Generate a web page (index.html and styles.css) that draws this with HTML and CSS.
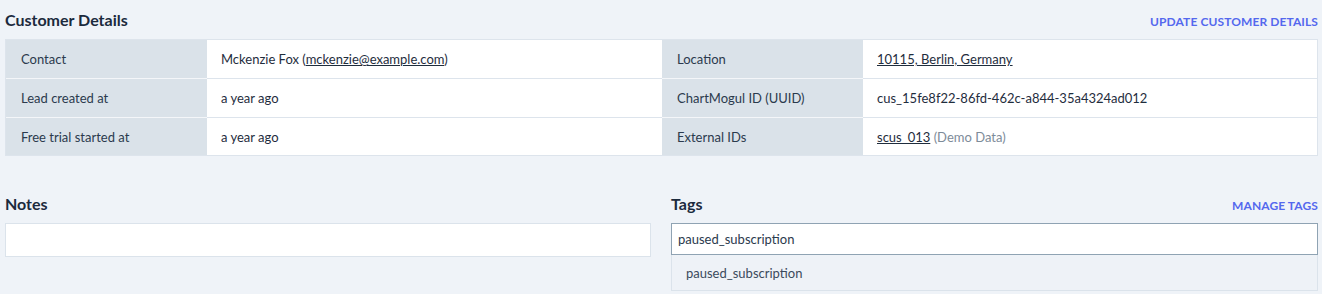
FILE: index.html
```html
<!DOCTYPE html>
<html lang="en">
<head>
<meta charset="utf-8">
<title>Customer Details</title>
<link rel="stylesheet" href="styles.css">
</head>
<body>
<div class="page">
  <section class="details">
    <header class="section-head">
      <h2 class="title">Customer Details</h2>
      <a class="action" href="#">Update customer details</a>
    </header>
    <div class="grid">
      <div class="half">
        <div class="row"><div class="label">Contact</div><div class="value"><span>Mckenzie Fox (<a class="link" href="#">mckenzie@example.com</a>)</span></div></div>
        <div class="row"><div class="label">Lead created at</div><div class="value"><span>a year ago</span></div></div>
        <div class="row"><div class="label">Free trial started at</div><div class="value"><span>a year ago</span></div></div>
      </div>
      <div class="half">
        <div class="row"><div class="label">Location</div><div class="value"><span><a class="link" href="#">10115, Berlin, Germany</a></span></div></div>
        <div class="row"><div class="label">ChartMogul ID (UUID)</div><div class="value"><span>cus_15fe8f22-86fd-462c-a844-35a4324ad012</span></div></div>
        <div class="row"><div class="label">External IDs</div><div class="value"><span><a class="link" href="#">scus_013</a> <span class="muted">(Demo Data)</span></span></div></div>
      </div>
    </div>
  </section>
  <section class="lower">
    <div class="col">
      <header class="section-head">
        <h2 class="title">Notes</h2>
      </header>
      <div class="notes-box"></div>
    </div>
    <div class="col">
      <header class="section-head">
        <h2 class="title">Tags</h2>
        <a class="action" href="#">Manage tags</a>
      </header>
      <div class="tag-input">paused_subscription</div>
      <div class="tag-option">paused_subscription</div>
    </div>
  </section>
</div>
</body>
</html>
```
FILE: styles.css
```css
* { box-sizing: border-box; }
html, body {
  margin: 0;
  padding: 0;
  background: #eff3f8;
}
body {
  font-family: Lato, "Open Sans", sans-serif;
  font-size: 13px;
  color: #1f2d3d;
}
.page {
  padding: 0 4px 0 5px;
}
.section-head {
  display: flex;
  align-items: center;
  justify-content: space-between;
  height: 39px;
}
.title {
  margin: 0;
  font-size: 16px;
  font-weight: 700;
  color: #1b2a3d;
}
.action {
  font-size: 12px;
  font-weight: 700;
  text-transform: uppercase;
  letter-spacing: 0.1px;
  color: #5468ee;
  text-decoration: none;
  padding-top: 3px;
}
.grid {
  display: grid;
  grid-template-columns: 656px 1fr;
  border: 1px solid #dde4ec;
  border-top: 0;
}
.half {
  display: flex;
  flex-direction: column;
}
.row {
  display: grid;
  grid-template-columns: 201px 1fr;
  height: 39px;
  border-top: 1px solid #dde4ec;
}
.row:last-child { height: 38px; }
.label {
  background: #dae2e9;
  padding: 0 15px;
  display: flex;
  align-items: center;
  color: #2b3a4d;
  border-top: 1px solid #f4f6f9;
  margin-top: -1px;
}
.row:first-child .label { border-top-color: #dde4ec; }
.value {
  background: #fff;
  padding: 0 14px;
  display: flex;
  align-items: center;
}
.link {
  color: #1f2d3d;
  text-decoration: underline;
}
.muted { color: #7d8b99; }
.lower {
  display: grid;
  grid-template-columns: 646px 1fr;
  column-gap: 20px;
  margin-top: 28px;
}
.notes-box {
  height: 34px;
  background: #fff;
  border: 1px solid #dbe3eb;
}
.tag-input {
  height: 32px;
  background: #fff;
  border: 1px solid #8fa3b3;
  padding: 0 6px;
  display: flex;
  align-items: center;
  color: #2b3a4d;
}
.tag-option {
  height: 36px;
  background: #eef2f7;
  border: 1px solid #dbe3eb;
  border-top: 0;
  padding: 0 14px;
  display: flex;
  align-items: center;
  color: #3b4a5c;
}
```
